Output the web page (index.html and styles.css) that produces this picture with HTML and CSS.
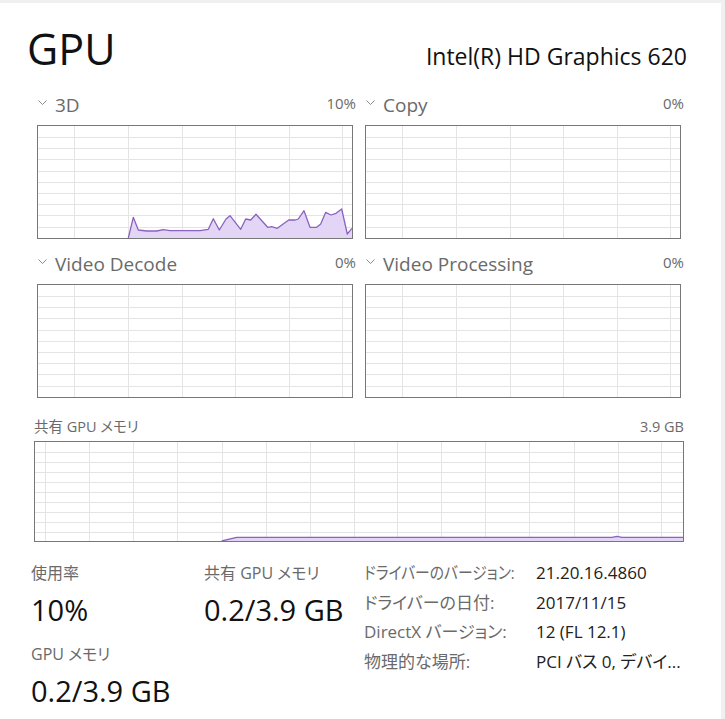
FILE: index.html
```html
<!DOCTYPE html>
<html lang="ja">
<head>
<meta charset="utf-8">
<title>GPU</title>
<link rel="stylesheet" href="styles.css">
</head>
<body>
<div class="window">
  <main class="panel">
    <header class="head">
      <h1 class="title">GPU</h1>
      <div class="adapter">Intel(R) HD Graphics 620</div>
    </header>

    <section class="engines">
      <div class="engine">
        <div class="engine-head">
          <svg class="chev" width="9" height="5" viewBox="0 0 9 5"><polyline points="0.5,0.5 4.5,4.5 8.5,0.5"/></svg>
          <span class="engine-name">3D</span>
          <span class="engine-pct">10%</span>
        </div>
        <div class="graph">
          <svg width="314" height="112" viewBox="0 0 314 112">
            <path class="grid" d="M36.5 0V112M90.5 0V112M144.5 0V112M197.5 0V112M251.5 0V112M304.5 0V112M0 11.5H314M0 22.5H314M0 33.5H314M0 45.5H314M0 56.5H314M0 67.5H314M0 78.5H314M0 89.5H314M0 101.5H314"/>
            <polygon class="area" points="90.3,112 95.3,91.3 100.3,104 108.7,105 118.7,105 125.3,103.7 132,104.7 162,104.7 170.3,103.3 175.3,92.7 181.3,104 188,93 192,89.7 202.7,103.3 207.7,93 212.7,94 218,88.3 229.7,101.3 233.7,100.7 239.3,102.3 250.7,94 257.3,94 260.3,93 266,84.7 272,101.3 278.7,101.3 282.7,98 287.7,86.3 293,89 298,87.3 303.7,83 309.3,108 314,102.3 314,112"/>
            <polyline class="line" points="90.3,112 95.3,91.3 100.3,104 108.7,105 118.7,105 125.3,103.7 132,104.7 162,104.7 170.3,103.3 175.3,92.7 181.3,104 188,93 192,89.7 202.7,103.3 207.7,93 212.7,94 218,88.3 229.7,101.3 233.7,100.7 239.3,102.3 250.7,94 257.3,94 260.3,93 266,84.7 272,101.3 278.7,101.3 282.7,98 287.7,86.3 293,89 298,87.3 303.7,83 309.3,108 314,102.3"/>
          </svg>
        </div>
      </div>

      <div class="engine">
        <div class="engine-head">
          <svg class="chev" width="9" height="5" viewBox="0 0 9 5"><polyline points="0.5,0.5 4.5,4.5 8.5,0.5"/></svg>
          <span class="engine-name">Copy</span>
          <span class="engine-pct">0%</span>
        </div>
        <div class="graph">
          <svg width="314" height="112" viewBox="0 0 314 112">
            <path class="grid" d="M36.5 0V112M90.5 0V112M144.5 0V112M197.5 0V112M251.5 0V112M304.5 0V112M0 11.5H314M0 22.5H314M0 33.5H314M0 45.5H314M0 56.5H314M0 67.5H314M0 78.5H314M0 89.5H314M0 101.5H314"/>
          </svg>
        </div>
      </div>

      <div class="engine">
        <div class="engine-head">
          <svg class="chev" width="9" height="5" viewBox="0 0 9 5"><polyline points="0.5,0.5 4.5,4.5 8.5,0.5"/></svg>
          <span class="engine-name">Video Decode</span>
          <span class="engine-pct">0%</span>
        </div>
        <div class="graph">
          <svg width="314" height="112" viewBox="0 0 314 112">
            <path class="grid" d="M36.5 0V112M90.5 0V112M144.5 0V112M197.5 0V112M251.5 0V112M304.5 0V112M0 11.5H314M0 22.5H314M0 33.5H314M0 45.5H314M0 56.5H314M0 67.5H314M0 78.5H314M0 89.5H314M0 101.5H314"/>
          </svg>
        </div>
      </div>

      <div class="engine">
        <div class="engine-head">
          <svg class="chev" width="9" height="5" viewBox="0 0 9 5"><polyline points="0.5,0.5 4.5,4.5 8.5,0.5"/></svg>
          <span class="engine-name">Video Processing</span>
          <span class="engine-pct">0%</span>
        </div>
        <div class="graph">
          <svg width="314" height="112" viewBox="0 0 314 112">
            <path class="grid" d="M36.5 0V112M90.5 0V112M144.5 0V112M197.5 0V112M251.5 0V112M304.5 0V112M0 11.5H314M0 22.5H314M0 33.5H314M0 45.5H314M0 56.5H314M0 67.5H314M0 78.5H314M0 89.5H314M0 101.5H314"/>
          </svg>
        </div>
      </div>
    </section>

    <section class="memory">
      <div class="mem-head">
        <span>共有 GPU メモリ</span>
        <span>3.9 GB</span>
      </div>
      <div class="graph mem-graph">
        <svg width="648" height="99" viewBox="0 0 648 99">
          <path class="grid" d="M10.5 0V99M54.5 0V99M98.5 0V99M142.5 0V99M187.5 0V99M231.5 0V99M275.5 0V99M319.5 0V99M362.5 0V99M406.5 0V99M450.5 0V99M494.5 0V99M539.5 0V99M583.5 0V99M626.5 0V99M0 10.5H648M0 20.5H648M0 30.5H648M0 40.5H648M0 50.5H648M0 60.5H648M0 70.5H648M0 80.5H648M0 90.5H648"/>
          <polygon class="area" points="186.7,99 201.7,95.3 577,95.3 582,94.3 587,95.3 648,95.3 648,99"/>
          <polyline class="line" points="186.7,99 201.7,95.3 577,95.3 582,94.3 587,95.3 648,95.3"/>
        </svg>
      </div>
    </section>

    <section class="stats">
      <div class="stat-col">
        <div class="stat">
          <div class="stat-label">使用率</div>
          <div class="stat-value">10%</div>
        </div>
        <div class="stat">
          <div class="stat-label">GPU メモリ</div>
          <div class="stat-value">0.2/3.9 GB</div>
        </div>
      </div>
      <div class="stat-col">
        <div class="stat">
          <div class="stat-label">共有 GPU メモリ</div>
          <div class="stat-value">0.2/3.9 GB</div>
        </div>
      </div>
      <dl class="info">
        <dt><span class="squeeze">ドライバーのバージョン:</span></dt><dd>21.20.16.4860</dd>
        <dt>ドライバーの日付:</dt><dd>2017/11/15</dd>
        <dt>DirectX バージョン:</dt><dd>12 (FL 12.1)</dd>
        <dt>物理的な場所:</dt><dd>PCI バス 0, デバイ...</dd>
      </dl>
    </section>
  </main>
  <div class="edge"></div>
</div>
</body>
</html>
```

FILE: styles.css
```css
* { box-sizing: border-box; }

html, body {
  margin: 0;
  padding: 0;
  background: #ffffff;
}

body {
  width: 725px;
  height: 719px;
  overflow: hidden;
  font-family: "Open Sans", "Noto Sans CJK JP", sans-serif;
  font-feature-settings: "palt";
  color: #111111;
}

.window {
  display: flex;
  height: 719px;
  border-top: 3px solid #f0f0f0;
}

.panel {
  flex: 1;
  padding: 20px 34px 0 27px;
}

.edge {
  width: 4px;
  background: #f0f0f0;
}

/* header */
.head {
  display: flex;
  justify-content: space-between;
  align-items: baseline;
  height: 52px;
}

.title {
  margin: 0;
  font-size: 43px;
  line-height: 52px;
  font-weight: 400;
  color: #111111;
}

.adapter {
  font-size: 23px;
  line-height: 28px;
  color: #111111;
}

/* engine graphs */
.engines {
  display: grid;
  grid-template-columns: 316px 316px;
  column-gap: 12px;
  row-gap: 14px;
  margin: 19px 0 0 10px;
}

.engine-head {
  display: flex;
  align-items: flex-start;
  height: 22px;
  margin-bottom: 9px;
  color: #6a6a6a;
}

.chev {
  flex: none;
  margin: 6px 8px 0 1px;
}

.chev polyline {
  fill: none;
  stroke: #8a8a8a;
  stroke-width: 1;
}

.engine-name {
  flex: 1;
  font-size: 19px;
  line-height: 22px;
}

.engine-pct {
  font-size: 15px;
  line-height: 18px;
  margin-right: -3px;
}

.graph {
  height: 114px;
  border: 1px solid #777777;
  background: #ffffff;
}

.graph svg {
  display: block;
}

.grid {
  fill: none;
  stroke: #e4e4e4;
  stroke-width: 1;
  shape-rendering: crispEdges;
}

.area {
  fill: #e3d5f5;
  stroke: none;
}

.line {
  fill: none;
  stroke: #8c62bf;
  stroke-width: 1.3;
  stroke-linejoin: round;
}

/* shared memory */
.memory {
  width: 650px;
  margin: 20px 0 0 7px;
}

.mem-head {
  display: flex;
  justify-content: space-between;
  height: 18px;
  margin-bottom: 5px;
  font-size: 14.5px;
  line-height: 18px;
  color: #6a6a6a;
}

.mem-graph {
  height: 101px;
}

/* stats */
.stats {
  display: grid;
  grid-template-columns: 173px 160px auto;
  align-items: start;
  margin: 16px 0 0 4px;
}

.stat-col {
  padding-top: 5px;
}

.stat + .stat {
  margin-top: 17px;
}

.stat-label {
  font-size: 16px;
  line-height: 20px;
  color: #6a6a6a;
}

.stat-value {
  margin-top: 10px;
  font-size: 29px;
  line-height: 34px;
  color: #111111;
}

.info {
  display: grid;
  grid-template-columns: 172px auto;
  align-content: start;
  margin: 0;
  font-size: 17px;
  line-height: 29.7px;
}

.info dt {
  color: #6a6a6a;
  white-space: nowrap;
}

.info dd {
  margin: 0;
  color: #222222;
  white-space: nowrap;
}

.squeeze {
  display: inline-block;
  transform: scaleX(0.87);
  transform-origin: left center;
}
```
